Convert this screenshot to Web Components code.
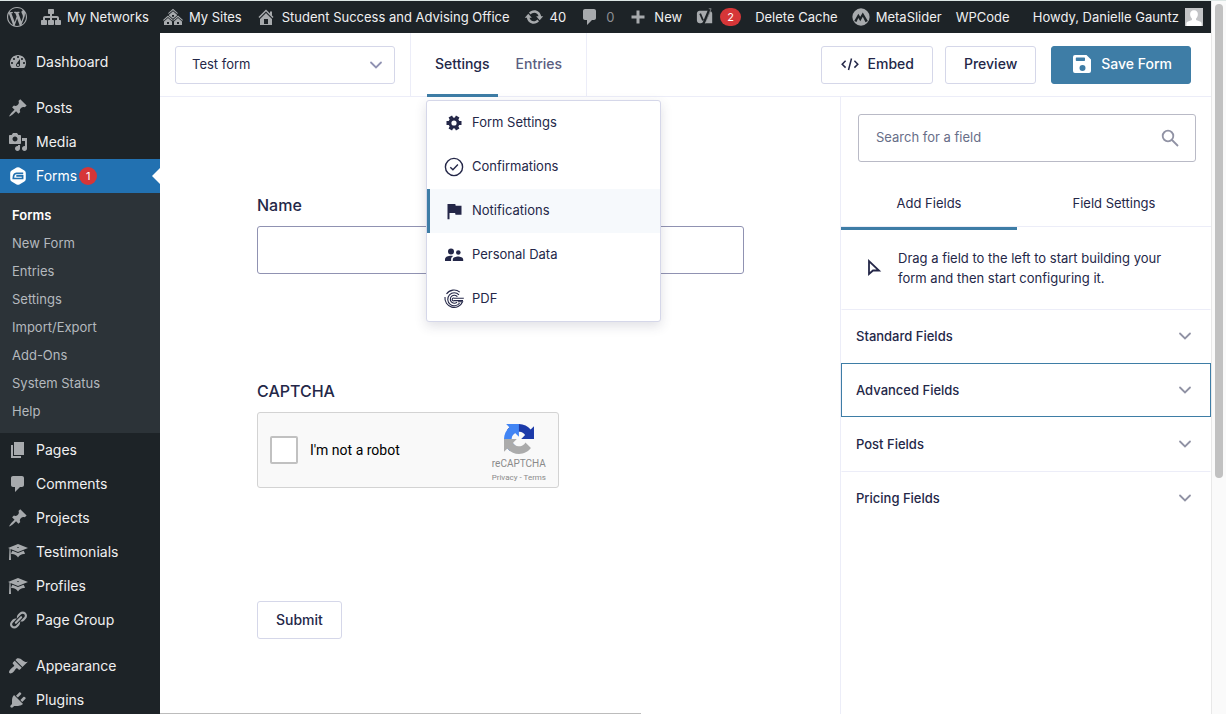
<!DOCTYPE html>
<html lang="en">
<head>
<meta charset="utf-8">
<title>Form Editor</title>
<style>
  html, body { margin: 0; height: 100%; }
  body { font: 14px/20px Inter, "Liberation Sans", sans-serif; color: #242748; background: #fff; overflow: hidden; }
</style>
</head>
<body>
<app-shell>
  <admin-bar slot="bar"></admin-bar>
  <admin-menu slot="menu"></admin-menu>
  <editor-header slot="header"></editor-header>
  <form-canvas slot="canvas"></form-canvas>
  <field-panel slot="panel"></field-panel>
</app-shell>

<script>
const ICONS = {
  wordpress: '<path d="M20 10c0-5.51-4.49-10-10-10C4.48 0 0 4.49 0 10c0 5.52 4.48 10 10 10 5.51 0 10-4.48 10-10zM7.78 15.37L4.37 6.22c.55-.02 1.17-.08 1.17-.08.5-.06.44-1.13-.06-1.11 0 0-1.45.11-2.37.11-.18 0-.37 0-.58-.01C4.12 2.69 6.87 1.11 10 1.11c2.33 0 4.45.87 6.05 2.34-.68-.11-1.65.39-1.65 1.58 0 .74.45 1.36.9 2.1.35.61.55 1.36.55 2.46 0 1.49-1.4 5-1.4 5l-3.03-8.37c.54-.02.82-.17.82-.17.5-.05.44-1.25-.06-1.22 0 0-1.44.12-2.38.12-.87 0-2.33-.12-2.33-.12-.5-.03-.56 1.2-.06 1.22l.92.08 1.26 3.41zM17.41 10c.24-.64.74-1.87.43-4.25.7 1.29 1.05 2.71 1.05 4.25 0 3.29-1.73 6.24-4.4 7.78.97-2.59 1.94-5.2 2.92-7.78zM6.1 18.09C3.12 16.65 1.11 13.53 1.11 10c0-1.3.23-2.48.72-3.59C3.25 10.3 4.67 14.2 6.1 18.09zm4.03-6.63l2.58 6.98c-.86.29-1.76.45-2.71.45-.79 0-1.57-.11-2.29-.33.81-2.38 1.62-4.74 2.42-7.1z"/>',
  network: '<path d="M18 13h1c.55 0 1 .45 1 1.01v2.98c0 .56-.45 1.01-1 1.01h-4c-.55 0-1-.45-1-1.01v-2.98c0-.56.45-1.01 1-1.01h1v-2h-5v2h1c.55 0 1 .45 1 1.01v2.98c0 .56-.45 1.01-1 1.01H8c-.55 0-1-.45-1-1.01v-2.98c0-.56.45-1.01 1-1.01h1v-2H4v2h1c.55 0 1 .45 1 1.01v2.98C6 17.55 5.55 18 5 18H1c-.55 0-1-.45-1-1.01v-2.98C0 13.45.45 13 1 13h1v-2c0-1.1.9-2 2-2h5V7H8c-.55 0-1-.45-1-1.01V3.01C7 2.45 7.45 2 8 2h4c.55 0 1 .45 1 1.01v2.98C13 6.55 12.55 7 12 7h-1v2h5c1.1 0 2 .9 2 2v2z"/>',
  multisite: '<path d="M14.27 6.87L10 3.14 5.73 6.87 5 6.14l5-4.38 5 4.38zM14 8.42l-4.05 3.43L6 8.38v-.74l4-3.5 4 3.5v.78zM11 9.7V8H9v1.7h2zm-1.73 4.03L5 10 .73 13.73 0 13l5-4.38L10 13zm10 0L15 10l-4.27 3.73L10 13l5-4.38L20 13zM5 11l4 3.5V18H1v-3.5zm10 0l4 3.5V18h-8v-3.5zm-9 6v-2H4v2h2zm10 0v-2h-2v2h2z"/>',
  home: '<path d="M16 8.5l1.53 1.53-1.06 1.06L10 4.6l-6.47 6.49-1.06-1.06L10 2.5l4 4v-2h2v4zm-6-2.46l6 5.99V18H4v-5.97zM12 17v-5H8v5h4z"/>',
  update: '<path d="M10.2 3.28c3.53 0 6.43 2.61 6.92 6h2.08l-3.5 4-3.5-4h2.32c-.45-1.97-2.21-3.45-4.32-3.45-1.45 0-2.73.71-3.54 1.78L4.95 5.66C6.23 4.2 8.11 3.28 10.2 3.28zm-.4 13.44c-3.52 0-6.43-2.61-6.92-6H.8l3.5-4c1.17 1.33 2.33 2.67 3.5 4H5.48c.45 1.97 2.21 3.45 4.32 3.45 1.45 0 2.73-.71 3.54-1.78l1.71 1.95c-1.28 1.46-3.15 2.38-5.25 2.38z"/>',
  comment: '<path d="M5 2h9c1.1 0 2 .9 2 2v7c0 1.1-.9 2-2 2h-2l-5 5v-5H5c-1.1 0-2-.9-2-2V4c0-1.1.9-2 2-2z"/>',
  plus: '<path d="M8.5 3.5h3v5h5v3h-5v5h-3v-5h-5v-3h5z"/>',
  yoast: '<path d="M4 3h9.6l-1.9 5-2.2 6.2c-.5 1.4-1.2 2.2-2.6 2.8H4c-1.6 0-3-1.3-3-3V6c0-1.7 1.4-3 3-3zM16.2 3.5c1.1.4 1.8 1.4 1.8 2.5v11H9.8c.8-.7 1.3-1.7 1.8-2.9z"/><path d="M4.6 6.2l3.2 7.6M14.8 1L8.9 15.2c-.5 1.5-1.4 2.6-3.1 2.7" fill="none" stroke="#1d2327" stroke-width="2"/><path d="M14.2.8h2.6L10.4 17" fill="none" stroke="currentColor" stroke-width=".7"/>',
  metaslider: '<circle cx="10" cy="10" r="9.600"/><path d="M2.500 14.500L7 6.500l2.200 3.200L12 5l5.600 9.500-2.600 1.300L12 9.800 9.200 14.600 7 11 5 15.500z" fill="#1d2327"/>',
  dashboard: '<path fill-rule="evenodd" d="M3.76 16h12.48c1.1-1.37 1.76-3.11 1.76-5 0-4.42-3.58-8-8-8s-8 3.58-8 8c0 1.89.66 3.63 1.76 5zM10 4c.55 0 1 .45 1 1s-.45 1-1 1-1-.45-1-1 .45-1 1-1zM6 6c.55 0 1 .45 1 1s-.45 1-1 1-1-.45-1-1 .45-1 1-1zm8 0c.55 0 1 .45 1 1s-.45 1-1 1-1-.45-1-1 .45-1 1-1zm-5.37 5.55L12 7v6c0 1.1-.9 2-2 2s-2-.9-2-2c0-.57.24-1.08.63-1.45zM4 10c.55 0 1 .45 1 1s-.45 1-1 1-1-.45-1-1 .45-1 1-1zm12 0c.55 0 1 .45 1 1s-.45 1-1 1-1-.45-1-1 .45-1 1-1zm-5 3c0-.55-.45-1-1-1s-1 .45-1 1 .45 1 1 1 1-.45 1-1z"/>',
  pin: '<path d="M10.44 3.02l1.82-1.82 6.36 6.35-1.83 1.82c-1.05-.68-2.48-.57-3.41.36l-.75.75c-.92.93-1.04 2.35-.35 3.41l-1.83 1.82-2.41-2.41-2.8 2.79c-.42.42-3.38 2.71-3.8 2.29s1.86-3.39 2.28-3.81l2.79-2.79L4.1 9.36l1.83-1.82c1.05.69 2.48.57 3.4-.36l.75-.75c.93-.92 1.05-2.35.36-3.41z"/>',
  media: '<path fill-rule="evenodd" d="M13 11V4c0-.55-.45-1-1-1h-1.67L9 1H5L3.67 3H2c-.55 0-1 .45-1 1v7c0 .55.45 1 1 1h10c.55 0 1-.45 1-1zM7 4.5c1.38 0 2.5 1.12 2.5 2.5S8.38 9.5 7 9.5 4.5 8.38 4.5 7 5.62 4.5 7 4.5zM14 6h5v10.5c0 1.38-1.12 2.5-2.5 2.5S14 17.88 14 16.5s1.12-2.5 2.5-2.5c.17 0 .34.02.5.05V9h-3V6zm-4 8.05V13h2v3.5c0 1.38-1.12 2.5-2.5 2.5S7 17.88 7 16.5 8.12 14 9.5 14c.17 0 .34.02.5.05z"/>',
  gravity: '<path d="M8.6 1.6a2.8 2.8 0 0 1 2.8 0l5 2.9a2.8 2.8 0 0 1 1.4 2.4v6.2a2.8 2.8 0 0 1-1.4 2.4l-5 2.9a2.8 2.8 0 0 1-2.8 0l-5-2.9a2.8 2.8 0 0 1-1.4-2.4V6.900a2.800 2.800 0 0 1 1.400-2.400z"/><path d="M15.200 7.300H8.400c-2 0-3 1.400-3.100 5.200h9.300V9.900H8.300" fill="none" stroke="#2271b1" stroke-width="1.700"/>',
  page: '<path d="M6 15V2h10v13H6zm-1 1h8v2H3V5h2v11z"/>',
  learn: '<path d="M10 10L2.54 7.02 3 18H1l.48-11.41L0 6l10-4 10 4zm0-5c-.55 0-1 .22-1 .5s.45.5 1 .5 1-.22 1-.5-.45-.5-1-.5zm0 6l5.57-2.23c.71.94 1.2 2.07 1.36 3.3-.3-.04-.61-.07-.93-.07-2.55 0-4.78 1.37-6 3.41C8.78 13.37 6.55 12 4 12c-.32 0-.63.03-.93.07.16-1.23.65-2.36 1.36-3.3z"/>',
  link: '<path d="M17.74 2.76c1.68 1.69 1.68 4.41 0 6.1l-1.53 1.52c-1.12 1.12-2.7 1.47-4.14 1.09l2.62-2.61.76-.77.76-.76c.84-.84.84-2.2 0-3.04-.84-.85-2.2-.85-3.04 0l-.77.76-3.38 3.38c-.37-1.44-.02-3.02 1.1-4.14l1.52-1.53c1.69-1.68 4.42-1.68 6.1 0zM8.59 13.43l5.34-5.34c.42-.42.42-1.1 0-1.52-.44-.43-1.13-.39-1.53 0l-5.33 5.34c-.42.42-.42 1.1 0 1.52.44.43 1.13.39 1.52 0zm-.76 2.29l4.14-4.15c.38 1.44.03 3.02-1.09 4.14l-1.52 1.53c-1.69 1.68-4.41 1.68-6.1 0-1.68-1.68-1.68-4.42 0-6.1l1.53-1.52c1.12-1.12 2.7-1.47 4.14-1.1l-4.14 4.15c-.85.84-.85 2.2 0 3.05.84.84 2.2.84 3.04 0z"/>',
  brush: '<path d="M14.48 11.06L7.41 3.99l1.5-1.5c.5-.56 2.3-.47 3.51.32 1.21.8 1.43 1.28 2.91 2.1 1.18.64 2.45 1.26 4.45.85zm-.71.71L6.7 4.7 4.93 6.47c-.39.39-.39 1.02 0 1.41l1.06 1.06c.39.39.39 1.03 0 1.42-.6.6-1.43 1.11-2.21 1.69-.35.26-.7.53-1.01.84C1.43 14.23.4 16.08 1.4 17.07c.99 1 2.84-.03 4.18-1.36.31-.31.58-.66.85-1.02.57-.78 1.08-1.61 1.69-2.21.39-.39 1.02-.39 1.41 0l1.06 1.06c.39.39 1.02.39 1.41 0z"/>',
  plug: '<path d="M13.11 4.36L9.87 7.6 8 5.73l3.24-3.24c.35-.34 1.05-.2 1.56.32.52.51.66 1.21.31 1.55zm-8 1.77l.91-1.12 9.01 9.01-1.19.84c-.71.71-2.63 1.16-3.82 1.16H6.14L4.9 17.26c-.59.59-1.54.59-2.12 0-.59-.58-.59-1.53 0-2.12l1.24-1.24v-3.88c0-1.13.4-3.19 1.09-3.89zm7.26 3.97l3.24-3.24c.34-.35 1.04-.21 1.55.31.52.51.66 1.21.31 1.55l-3.24 3.25z"/>',
  chevron: '<path d="M5 7.500l5 5 5-5" fill="none" stroke="currentColor" stroke-width="1.800" stroke-linecap="round"/>',
  code: '<path d="M5.600 6.800L2.200 10.200l3.400 3.400M14.400 6.800l3.400 3.400-3.400 3.400M11.500 4.500l-3 11.500" fill="none" stroke="currentColor" stroke-width="1.500"/>',
  save: '<path fill-rule="evenodd" d="M3 1h11.500L19 5.500V17a2 2 0 0 1-2 2H3a2 2 0 0 1-2-2V3a2 2 0 0 1 2-2zm1.500 2.600a.7.7 0 0 0-.7.7v2a.7.7 0 0 0 .7.700h7.800a.7.700 0 0 0 .700-.700v-2a.7.7 0 0 0-.7-.7zM10.500 11a3 3 0 1 0 0 6 3 3 0 0 0 0-6z"/>',
  gear: '<g fill="none" stroke="currentColor"><circle cx="10" cy="10" r="4.100" stroke-width="3"/><path d="M15 10h2.500M5 10H2.500M12.500 5.670l1.200-2.100M7.500 5.670l-1.200-2.100M12.500 14.330l1.200 2.100M7.500 14.330l-1.200 2.100" stroke-width="4" /></g>',
  check: '<g fill="none" stroke="currentColor" stroke-width="1.400"><circle cx="10" cy="10" r="8.600"/><path d="M6.300 10.300l2.600 2.500 5-5.200"/></g>',
  flag: '<path d="M3.500 3h7.800l.4 1.700H17.500v9h-6l-.4-1.700H5.500v6.200h-2z"/>',
  people: '<circle cx="7" cy="6.500" r="3"/><circle cx="14.300" cy="7.500" r="2.300"/><path d="M1 16v-1.800c0-2.400 3.500-3.500 6-3.500.6 0 1.400.1 2.100.3-1.300.8-2 1.900-2 3.200V16zM8.800 16v-1.600c0-2 3.200-2.900 5.200-2.900s5.200.9 5.200 2.900V16z"/>',
  pdf: '<g fill="none" stroke="currentColor" stroke-width="1.100"><path d="M15.800 3.200A9 9 0 0 0 2.500 5M1 8a9.200 9.200 0 0 0 17.600 4.800H14"/><path d="M15 5.900A6.500 6.500 0 1 0 15.600 14"/><path d="M19.800 9.200H10.300a1.400 1.400 0 1 0 0 2.400h8.700"/><path d="M13.400 7.700A4 4 0 1 0 13 13.200"/></g>',
  search: '<g fill="none" stroke="currentColor" stroke-width="1.800"><circle cx="8" cy="8" r="5.300"/><path d="M12 12l6 6"/></g>',
  cursor: '<path d="M5 3v13l4-3.500h6z" fill="none" stroke="currentColor" stroke-width="1.800"/>',
  avatar: '<path fill="#c3c4c7" d="M0 0h20v20H0z"/><path fill="#fff" d="M10 2.500c2.800 0 4.500 2 4.300 4.800-.1 1.900-.9 3.400-2 4.400v1.500l5 2.200c1 .5 1.200 1.400 1.200 2.600v2h-17v-2c0-1.200.2-2.100 1.200-2.600l5-2.200v-1.500c-1.100-1-1.900-2.500-2-4.400C5.500 4.500 7.200 2.500 10 2.500z"/>',
  recaptcha: '<g transform="scale(.3125)"><path fill="#1c3aa9" d="M64 31.955l-.033-1.370V4.687l-7.160 7.160C50.948 4.674 42.033.093 32.050.093c-10.400 0-19.622 4.960-25.458 12.640l11.736 11.860a15.550 15.550 0 0 1 4.754-5.334c2.050-1.600 4.952-2.906 8.968-2.906.485 0 .860.057 1.135.163 4.976.393 9.288 3.140 11.828 7.124l-8.307 8.307L64 31.953"/><path fill="#4285f4" d="M31.862.094l-1.370.033H4.594l7.160 7.160C4.580 13.147 0 22.060 0 32.046c0 10.400 4.960 19.622 12.640 25.458L24.500 45.768a15.550 15.550 0 0 1-5.334-4.754c-1.600-2.050-2.906-4.952-2.906-8.968 0-.485.057-.860.163-1.135.393-4.976 3.140-9.288 7.124-11.828l8.307 8.307L31.860.095"/><path fill="#ababab" d="M.001 32.045l.033 1.370v25.898l7.160-7.160c5.860 7.173 14.774 11.754 24.760 11.754 10.400 0 19.622-4.960 25.458-12.640l-11.736-11.860a15.550 15.550 0 0 1-4.754 5.334c-2.050 1.600-4.952 2.906-8.968 2.906-.485 0-.860-.057-1.135-.163-4.976-.393-9.288-3.140-11.828-7.124l8.307-8.307c-10.522.040-22.400.066-27.295-.005"/></g>'
};

/* Base class: fills an open shadow root from the markup its view() returns. */
class Component extends HTMLElement {
  constructor() {
    super();
    const tpl = document.createElement('template');
    tpl.innerHTML = '<style>*{box-sizing:border-box}a{color:inherit;text-decoration:none}button,input,select{font:inherit;color:inherit;margin:0}</style>' + this.view();
    this.attachShadow({ mode: 'open' }).append(tpl.content.cloneNode(true));
  }
  view() { return ''; }
}

customElements.define('ui-icon', class extends Component {
  view() {
    return `<style>:host{display:block;flex:none;width:20px;height:20px}svg{display:block;width:100%;height:100%;overflow:visible}</style>
    <svg viewBox="0 0 20 20" fill="currentColor" aria-hidden="true"></svg>`;
  }
  connectedCallback() { this.shadowRoot.querySelector('svg').innerHTML = ICONS[this.getAttribute('name')] || ''; }
});

customElements.define('count-badge', class extends Component {
  view() {
    return `<style>:host{display:inline-block;min-width:18px;height:18px;padding:0 5px;border-radius:9px;background:#d63638;color:#fff;font-size:11px;line-height:18px;text-align:center;box-sizing:border-box}</style><slot></slot>`;
  }
});

customElements.define('app-shell', class extends Component {
  view() {
    return `<style>
      :host{display:grid;grid-template:"bar bar scroll" 32px "menu header scroll" 64px "menu body scroll" minmax(0,1fr) / 160px minmax(0,1fr) 15px;height:100vh;border-top:1px solid #dce6e4;box-sizing:border-box;overflow:hidden}
      ::slotted([slot=bar]){grid-area:bar}
      ::slotted([slot=menu]){grid-area:menu}
      ::slotted([slot=header]){grid-area:header;z-index:2}
      .body{grid-area:body;display:grid;grid-template-columns:minmax(0,1fr) 371px;min-height:0}
      .scroll{grid-area:scroll;background:#fafafa;border-left:1px solid #e8e8e8;padding:3px}
      .thumb{width:8px;height:67%;border-radius:4px;background:#c1c1c1}
    </style>
    <slot name="bar"></slot><slot name="menu"></slot><slot name="header"></slot>
    <div class="body"><slot name="canvas"></slot><slot name="panel"></slot></div>
    <div class="scroll" aria-hidden="true"><div class="thumb"></div></div>`;
  }
});

customElements.define('bar-item', class extends Component {
  view() {
    return `<style>:host{display:block}a{display:flex;align-items:center;gap:6px;height:32px;white-space:nowrap}</style><a href="#"><slot></slot></a>`;
  }
});

customElements.define('admin-bar', class extends Component {
  view() {
    return `<style>
      :host{display:block;background:#1d2327;color:#f0f0f1;font-size:13px;line-height:32px}
      nav{display:flex;gap:14px;padding:0 8px 0 7px;height:32px}
      ui-icon{color:#a7aaad}
      .small{width:18px;height:18px}
      .dim{color:#8c8f94}
      .me{margin-left:auto}
      count-badge{min-width:21px}
    </style>
    <nav aria-label="Toolbar">
      <bar-item><ui-icon name="wordpress"></ui-icon></bar-item>
      <bar-item><ui-icon name="network"></ui-icon>My Networks</bar-item>
      <bar-item><ui-icon name="multisite"></ui-icon>My Sites</bar-item>
      <bar-item><ui-icon name="home"></ui-icon>Student Success and Advising Office</bar-item>
      <bar-item><ui-icon name="update"></ui-icon>40</bar-item>
      <bar-item class="dim"><ui-icon name="comment"></ui-icon>0</bar-item>
      <bar-item><ui-icon name="plus"></ui-icon>New</bar-item>
      <bar-item><ui-icon name="yoast" class="small"></ui-icon><count-badge>2</count-badge></bar-item>
      <bar-item>Delete Cache</bar-item>
      <bar-item><ui-icon name="metaslider" class="small"></ui-icon>MetaSlider</bar-item>
      <bar-item>WPCode</bar-item>
      <bar-item class="me">Howdy, Danielle Gauntz<ui-icon name="avatar" class="small"></ui-icon></bar-item>
    </nav>`;
  }
});

customElements.define('menu-item', class extends Component {
  view() {
    return `<style>
      :host{display:block;color:#f0f0f1}
      a{display:flex;align-items:center;gap:8px;height:34px;padding-left:8px;position:relative}
      ui-icon{color:#a7aaad}
      .label{display:flex;align-items:center;gap:2px}
      :host([current]) a{background:#2271b1;color:#fff}
      :host([current]) ui-icon{color:#fff}
      :host([current]) a::after{content:"";position:absolute;right:0;top:50%;margin-top:-8px;border:8px solid transparent;border-right-color:#fff;border-left:0}
    </style><a href="#"><ui-icon></ui-icon><span class="label"><slot></slot></span></a>`;
  }
  connectedCallback() {
    const icon = this.shadowRoot.querySelector('ui-icon');
    icon.setAttribute('name', this.getAttribute('icon'));
    icon.connectedCallback();
  }
});

customElements.define('admin-menu', class extends Component {
  view() {
    return `<style>
      :host{display:block;background:#1d2327;padding-top:12px;overflow:hidden;min-height:0}
      .group{margin-bottom:12px}
      .sub{display:flex;flex-direction:column;background:#2c3338;padding:8px 12px;font-size:13px;line-height:28px;color:#b4b9be}
      .sub .on{color:#fff;font-weight:600}
    </style>
    <nav aria-label="Main menu">
      <div class="group"><menu-item icon="dashboard">Dashboard</menu-item></div>
      <div class="group">
        <menu-item icon="pin">Posts</menu-item>
        <menu-item icon="media">Media</menu-item>
        <menu-item icon="gravity" current>Forms <count-badge>1</count-badge></menu-item>
        <div class="sub"><a href="#" class="on">Forms</a><a href="#">New Form</a><a href="#">Entries</a><a href="#">Settings</a><a href="#">Import/Export</a><a href="#">Add-Ons</a><a href="#">System Status</a><a href="#">Help</a></div>
        <menu-item icon="page">Pages</menu-item>
        <menu-item icon="comment">Comments</menu-item>
        <menu-item icon="pin">Projects</menu-item>
        <menu-item icon="learn">Testimonials</menu-item>
        <menu-item icon="learn">Profiles</menu-item>
        <menu-item icon="link">Page Group</menu-item>
      </div>
      <div class="group">
        <menu-item icon="brush">Appearance</menu-item>
        <menu-item icon="plug">Plugins</menu-item>
      </div>
    </nav>`;
  }
});

customElements.define('settings-menu', class extends Component {
  view() {
    return `<style>
      :host{display:block;width:235px;background:#fff;border:1px solid #d5d7e9;border-radius:3px;box-shadow:0 4px 12px rgba(58,58,87,.16);box-sizing:border-box;font-size:13px;font-weight:400;color:#242748}
      a{display:flex;align-items:center;gap:8px;height:44px;padding:0 14px;border-left:3px solid transparent}
      a.on{background:#f6f9fc;border-left-color:#3e7da6}
      span{padding-bottom:2px}
    </style>
    <a href="#"><ui-icon name="gear"></ui-icon><span>Form Settings</span></a>
    <a href="#"><ui-icon name="check"></ui-icon><span>Confirmations</span></a>
    <a href="#" class="on"><ui-icon name="flag"></ui-icon><span>Notifications</span></a>
    <a href="#"><ui-icon name="people"></ui-icon><span>Personal Data</span></a>
    <a href="#"><ui-icon name="pdf"></ui-icon><span>PDF</span></a>`;
  }
});

customElements.define('editor-header', class extends Component {
  view() {
    return `<style>
      :host{display:flex;align-items:stretch;padding:0 20px 0 15px;background:#fff;border-bottom:1px solid #ecedf8;box-sizing:border-box}
      .pick{position:relative;align-self:center;width:220px;margin-right:15px}
      select{appearance:none;display:block;width:100%;height:38px;padding:0 16px 2px;border:1px solid #d5d7e9;border-radius:3px;background:#fff;font-size:13px}
      .pick ui-icon{position:absolute;right:9px;top:9px;color:#9092b2;pointer-events:none}
      nav{display:flex;gap:10px;padding:0 16px;border:solid #ecedf8;border-width:0 1px}
      .tab{position:relative;font-weight:500;color:#5b5e80;line-height:62px}
      .tab>a{display:block;height:64px;padding:0 8px;border-bottom:3px solid transparent}
      .tab.on{color:#242748}.tab.on>a{border-bottom-color:#3e7da6}
      settings-menu{position:absolute;top:67px;left:-1px;line-height:20px}
      .actions{display:flex;align-items:center;gap:12px;margin-left:auto}
      button{display:flex;align-items:center;gap:8px;height:38px;padding:0 18px 2px;border:1px solid #d5d7e9;border-radius:3px;background:#fff;font-weight:500}
      .save{margin-left:3px;padding-left:20px;gap:9px;background:#3e7da6;border-color:#3e7da6;color:#fff}
    </style>
    <div class="pick"><select aria-label="Form"><option>Test form</option></select><ui-icon name="chevron"></ui-icon></div>
    <nav aria-label="Form views">
      <div class="tab on"><a href="#">Settings</a><settings-menu></settings-menu></div>
      <div class="tab"><a href="#">Entries</a></div>
    </nav>
    <div class="actions">
      <button type="button"><ui-icon name="code"></ui-icon>Embed</button>
      <button type="button">Preview</button>
      <button type="button" class="save"><ui-icon name="save"></ui-icon>Save Form</button>
    </div>`;
  }
});

customElements.define('captcha-box', class extends Component {
  view() {
    return `<style>
      :host{display:flex;align-items:center;justify-content:space-between;width:302px;height:76px;padding:0 12px;border:1px solid #d3d3d3;border-radius:3px;background:#f9f9f9;color:#000;box-sizing:border-box;font-family:Roboto,"Liberation Sans",sans-serif}
      label{display:flex;align-items:center;gap:12px}
      input{appearance:none;width:28px;height:28px;border:2px solid #c1c1c1;border-radius:2px;background:#fff}
      .brand{display:flex;flex-direction:column;align-items:center;color:#8a8a8a;font-size:10px;line-height:14px;padding-top:8px}
      ui-icon{width:30px;height:30px;margin-bottom:3px}
      small{font-size:8px}
    </style>
    <label><input type="checkbox"><span>I'm not a robot</span></label>
    <div class="brand"><ui-icon name="recaptcha"></ui-icon><span>reCAPTCHA</span><small><a href="#">Privacy</a> - <a href="#">Terms</a></small></div>`;
  }
});

customElements.define('form-canvas', class extends Component {
  view() {
    return `<style>
      :host{display:block;padding:98px 96px 0 97px;overflow:hidden;position:relative}
      .title{display:block;font-size:16px;line-height:20px;font-weight:500;margin-bottom:11px}
      input{display:block;width:100%;height:48px;border:1px solid #9092b2;border-radius:3px;background:#fff;padding:0 12px}
      .field{margin-bottom:107px}
      .footer{padding-top:6px}
      button{height:38px;padding:0 18px;border:1px solid #d5d7e9;border-radius:3px;background:#fff;font-weight:500}
      .status{position:absolute;left:0;bottom:0;width:481px;height:1px;background:#bcbcbc}
    </style>
    <div class="field"><label class="title" for="name">Name</label><input id="name" type="text"></div>
    <div class="field"><div class="title">CAPTCHA</div><captcha-box></captcha-box></div>
    <div class="footer"><button type="button">Submit</button></div>
    <div class="status" aria-hidden="true"></div>`;
  }
});

customElements.define('field-section', class extends Component {
  view() {
    return `<style>
      :host{display:block;border:1px solid transparent;border-top-color:#ecedf8}
      :host([active]){border-color:#3e7da6}
      button{display:flex;justify-content:space-between;align-items:center;width:100%;height:52px;padding:0 15px 0 14px;border:0;background:none;font-size:13px;font-weight:500;text-align:left}
      ui-icon{color:#9092a4}
    </style><button type="button" aria-expanded="false"><slot></slot><ui-icon name="chevron"></ui-icon></button>`;
  }
});

customElements.define('field-panel', class extends Component {
  view() {
    return `<style>
      :host{display:block;border-left:1px solid #ecedf8;background:#fff;overflow:hidden;min-height:0;font-size:13px}
      .search{display:flex;align-items:center;height:48px;margin:17px 15px 16px 17px;padding:0 15px 0 17px;border:1px solid #b9bac6;border-radius:3px}
      input{flex:1;min-width:0;height:44px;border:0;outline:0;background:none;padding:0 0 2px}
      input::placeholder{color:#686e88;opacity:1}
      .search ui-icon{color:#9092a4}
      .tabs{display:flex;border-bottom:1px solid #ecedf8}
      .tabs button{flex:1 1 auto;height:48px;border:0;background:none;padding:2px 0 0;position:relative}
      .tabs button.on::after{content:"";position:absolute;left:0;right:0;top:49px;height:3px;background:#3e7da6}
      .hint{display:flex;align-items:center;gap:14px;height:82px;padding:0 40px 0 23px}
      .hint p{margin:0}
      field-section[active] + field-section{border-top-color:transparent}
    </style>
    <div class="search" role="search"><input type="search" placeholder="Search for a field" aria-label="Search for a field"><ui-icon name="search"></ui-icon></div>
    <div class="tabs"><button type="button" class="on">Add Fields</button><button type="button">Field Settings</button></div>
    <div class="hint"><ui-icon name="cursor"></ui-icon><p>Drag a field to the left to start building your form and then start configuring it.</p></div>
    <field-section>Standard Fields</field-section>
    <field-section active>Advanced Fields</field-section>
    <field-section>Post Fields</field-section>
    <field-section>Pricing Fields</field-section>`;
  }
});
</script>
</body>
</html>
